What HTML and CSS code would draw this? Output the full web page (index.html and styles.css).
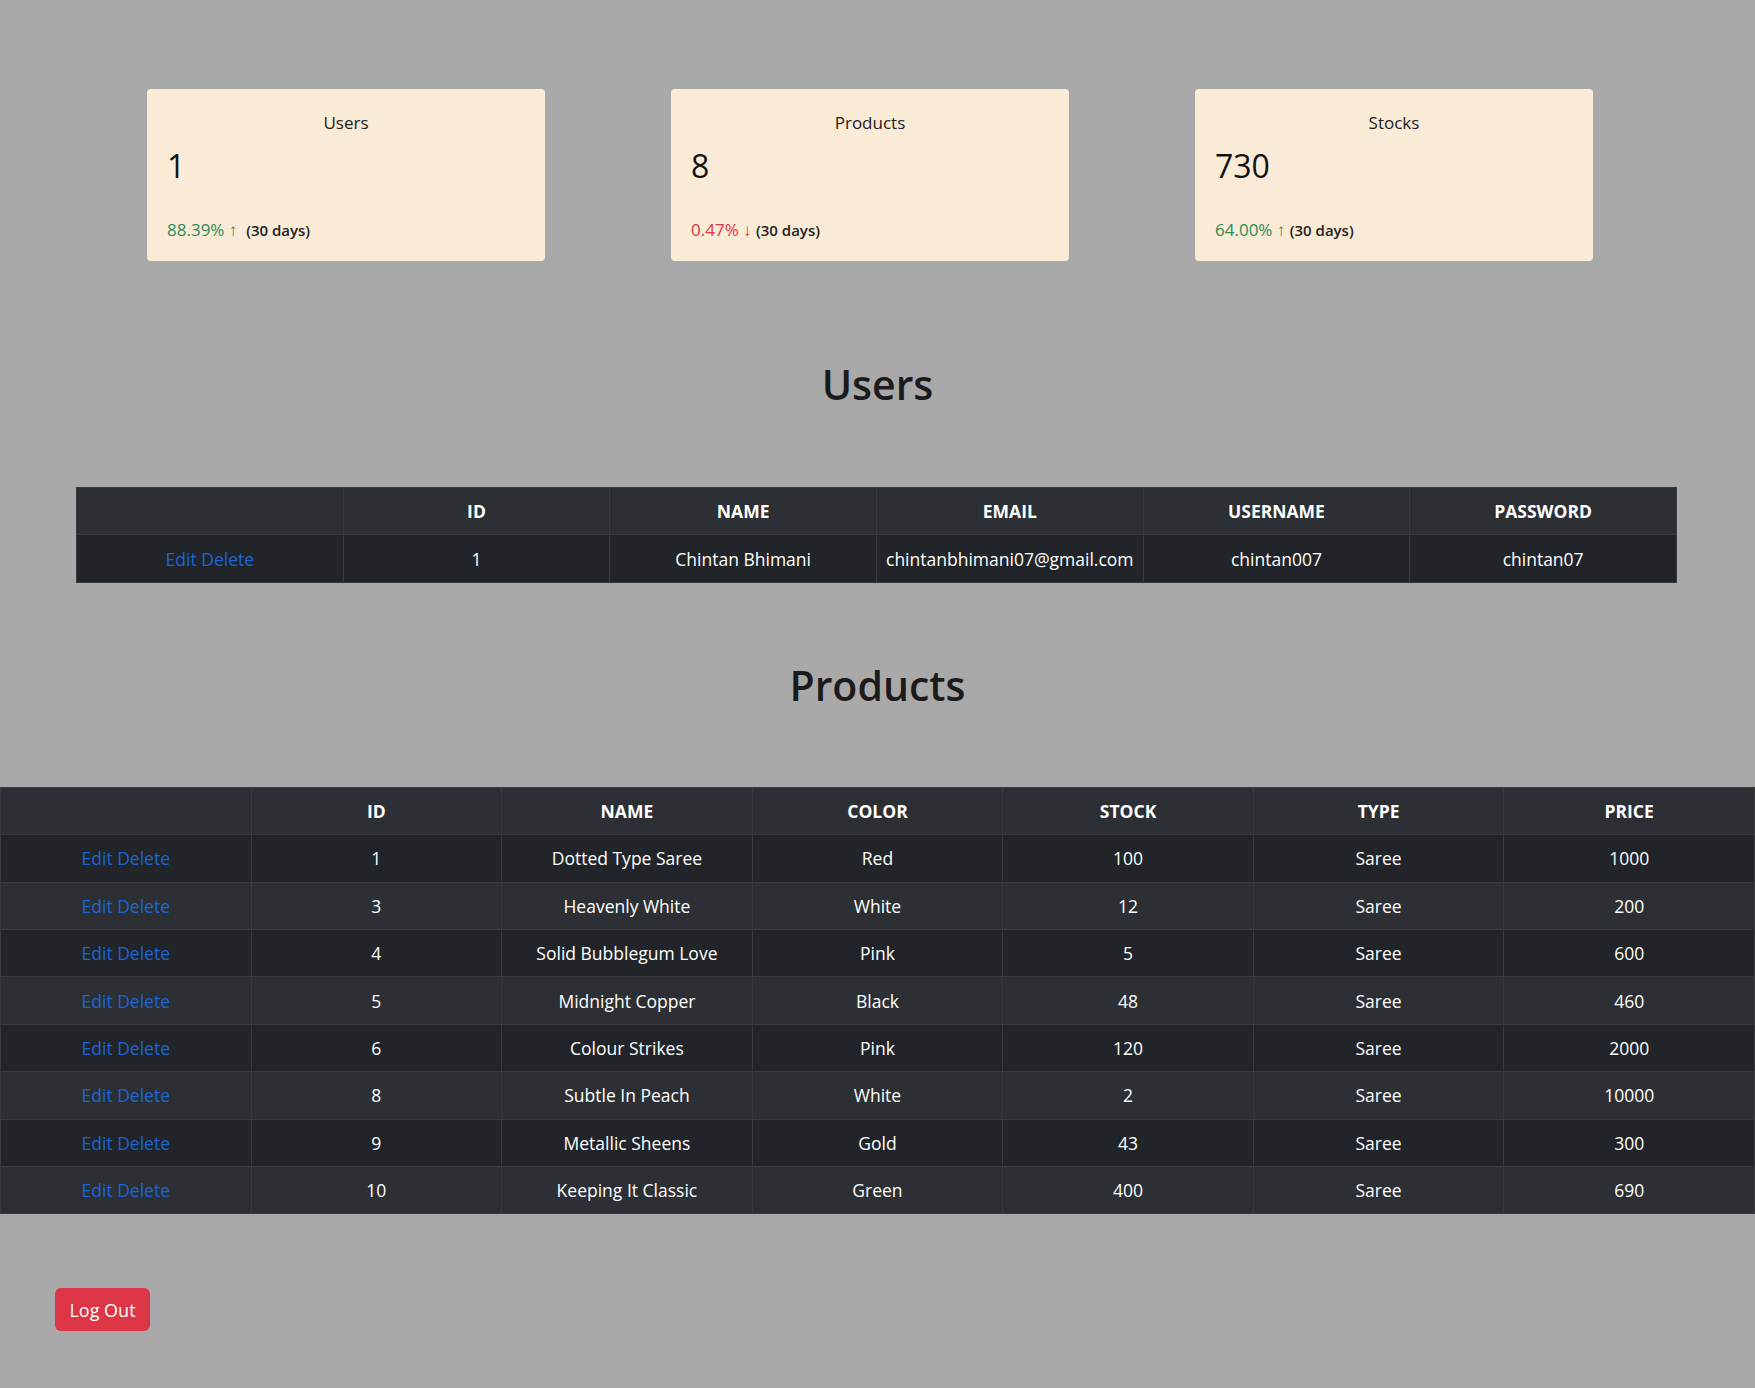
FILE: index.html
```html
<!DOCTYPE html>
<html>
<head>
<meta charset="utf-8">
<link rel="stylesheet" href="styles.css">
</head>
<body>
<section class="cards">
  <div class="card">
    <div class="card-title">Users</div>
    <div class="card-num">1</div>
    <div class="card-foot"><span class="up">88.39% ↑</span>&nbsp; <span class="days">(30 days)</span></div>
  </div>
  <div class="card">
    <div class="card-title">Products</div>
    <div class="card-num">8</div>
    <div class="card-foot"><span class="down">0.47% ↓</span> <span class="days">(30 days)</span></div>
  </div>
  <div class="card">
    <div class="card-title">Stocks</div>
    <div class="card-num">730</div>
    <div class="card-foot"><span class="up">64.00% ↑</span> <span class="days">(30 days)</span></div>
  </div>
</section>

<h1 class="heading users-heading">Users</h1>
<table class="tbl users-tbl">
  <tr class="hd"><th></th><th>ID</th><th>NAME</th><th>EMAIL</th><th>USERNAME</th><th>PASSWORD</th></tr>
  <tr class="dk"><td><a href="#">Edit</a> <a href="#">Delete</a></td><td>1</td><td>Chintan Bhimani</td><td>chintanbhimani07@gmail.com</td><td>chintan007</td><td>chintan07</td></tr>
</table>

<h1 class="heading products-heading">Products</h1>
<table class="tbl products-tbl">
  <tr class="hd"><th></th><th>ID</th><th>NAME</th><th>COLOR</th><th>STOCK</th><th>TYPE</th><th>PRICE</th></tr>
  <tr class="dk"><td><a href="#">Edit</a> <a href="#">Delete</a></td><td>1</td><td>Dotted Type Saree</td><td>Red</td><td>100</td><td>Saree</td><td>1000</td></tr>
  <tr class="lt"><td><a href="#">Edit</a> <a href="#">Delete</a></td><td>3</td><td>Heavenly White</td><td>White</td><td>12</td><td>Saree</td><td>200</td></tr>
  <tr class="dk"><td><a href="#">Edit</a> <a href="#">Delete</a></td><td>4</td><td>Solid Bubblegum Love</td><td>Pink</td><td>5</td><td>Saree</td><td>600</td></tr>
  <tr class="lt"><td><a href="#">Edit</a> <a href="#">Delete</a></td><td>5</td><td>Midnight Copper</td><td>Black</td><td>48</td><td>Saree</td><td>460</td></tr>
  <tr class="dk"><td><a href="#">Edit</a> <a href="#">Delete</a></td><td>6</td><td>Colour Strikes</td><td>Pink</td><td>120</td><td>Saree</td><td>2000</td></tr>
  <tr class="lt"><td><a href="#">Edit</a> <a href="#">Delete</a></td><td>8</td><td>Subtle In Peach</td><td>White</td><td>2</td><td>Saree</td><td>10000</td></tr>
  <tr class="dk"><td><a href="#">Edit</a> <a href="#">Delete</a></td><td>9</td><td>Metallic Sheens</td><td>Gold</td><td>43</td><td>Saree</td><td>300</td></tr>
  <tr class="lt"><td><a href="#">Edit</a> <a href="#">Delete</a></td><td>10</td><td>Keeping It Classic</td><td>Green</td><td>400</td><td>Saree</td><td>690</td></tr>
</table>

<div class="footer">
  <button class="logout">Log Out</button>
</div>
</body>
</html>
```

FILE: styles.css
```css
* { box-sizing: border-box; }
html, body {
  margin: 0;
  padding: 0;
}
body {
  background: #a9a9a9;
  font-family: "Open Sans", "Noto Sans", sans-serif;
  color: #212529;
  min-height: 1388px;
}
.cards {
  display: flex;
  gap: 126px;
  padding: 89px 0 0 147px;
}
.card {
  width: 398px;
  height: 172px;
  background: #faebd7;
  border-radius: 4px;
  padding: 22px 20px 19px 20px;
}
.card-title {
  text-align: center;
  font-size: 17px;
  line-height: 24px;
  color: #222;
}
.card-num {
  margin-top: 11px;
  font-size: 32px;
  line-height: 40px;
  color: #111;
}
.card-foot {
  margin-top: 32px;
  font-size: 17px;
  line-height: 24px;
}
.up { color: #2e8a57; }
.down { color: #dc3545; }
.days {
  font-size: 15px;
  font-weight: 600;
  color: #222;
}
.heading {
  margin: 0;
  text-align: center;
  font-size: 41px;
  font-weight: 600;
  line-height: 56px;
  color: #1b1b1b;
}
.users-heading { margin-top: 95px; }
.products-heading { margin-top: 74px; }
.tbl {
  border-collapse: collapse;
  table-layout: fixed;
  color: #fff;
  font-size: 17.5px;
}
.users-tbl {
  width: 1601px;
  margin: 75px auto 0 76px;
}
.products-tbl {
  width: 1755px;
  margin-top: 74px;
}
.tbl tr { height: 47.4px; }
.tbl th, .tbl td {
  border: 1px solid #373b3e;
  text-align: center;
  vertical-align: middle;
  padding: 0 8px;
  white-space: nowrap;
}
.tbl th { font-weight: 700; }
.hd { background: #2c3034; }
.lt { background: #2c3034; }
.dk { background: #212529; }
.tbl a {
  color: #1d63d8;
  text-decoration: none;
}
.footer {
  padding: 74px 0 0 55px;
}
.logout {
  background: #dc3545;
  color: #fff;
  border: none;
  border-radius: 6px;
  font-family: "Open Sans", "Noto Sans", sans-serif;
  font-size: 18px;
  width: 95px;
  height: 43px;
  padding: 0;
}
```
